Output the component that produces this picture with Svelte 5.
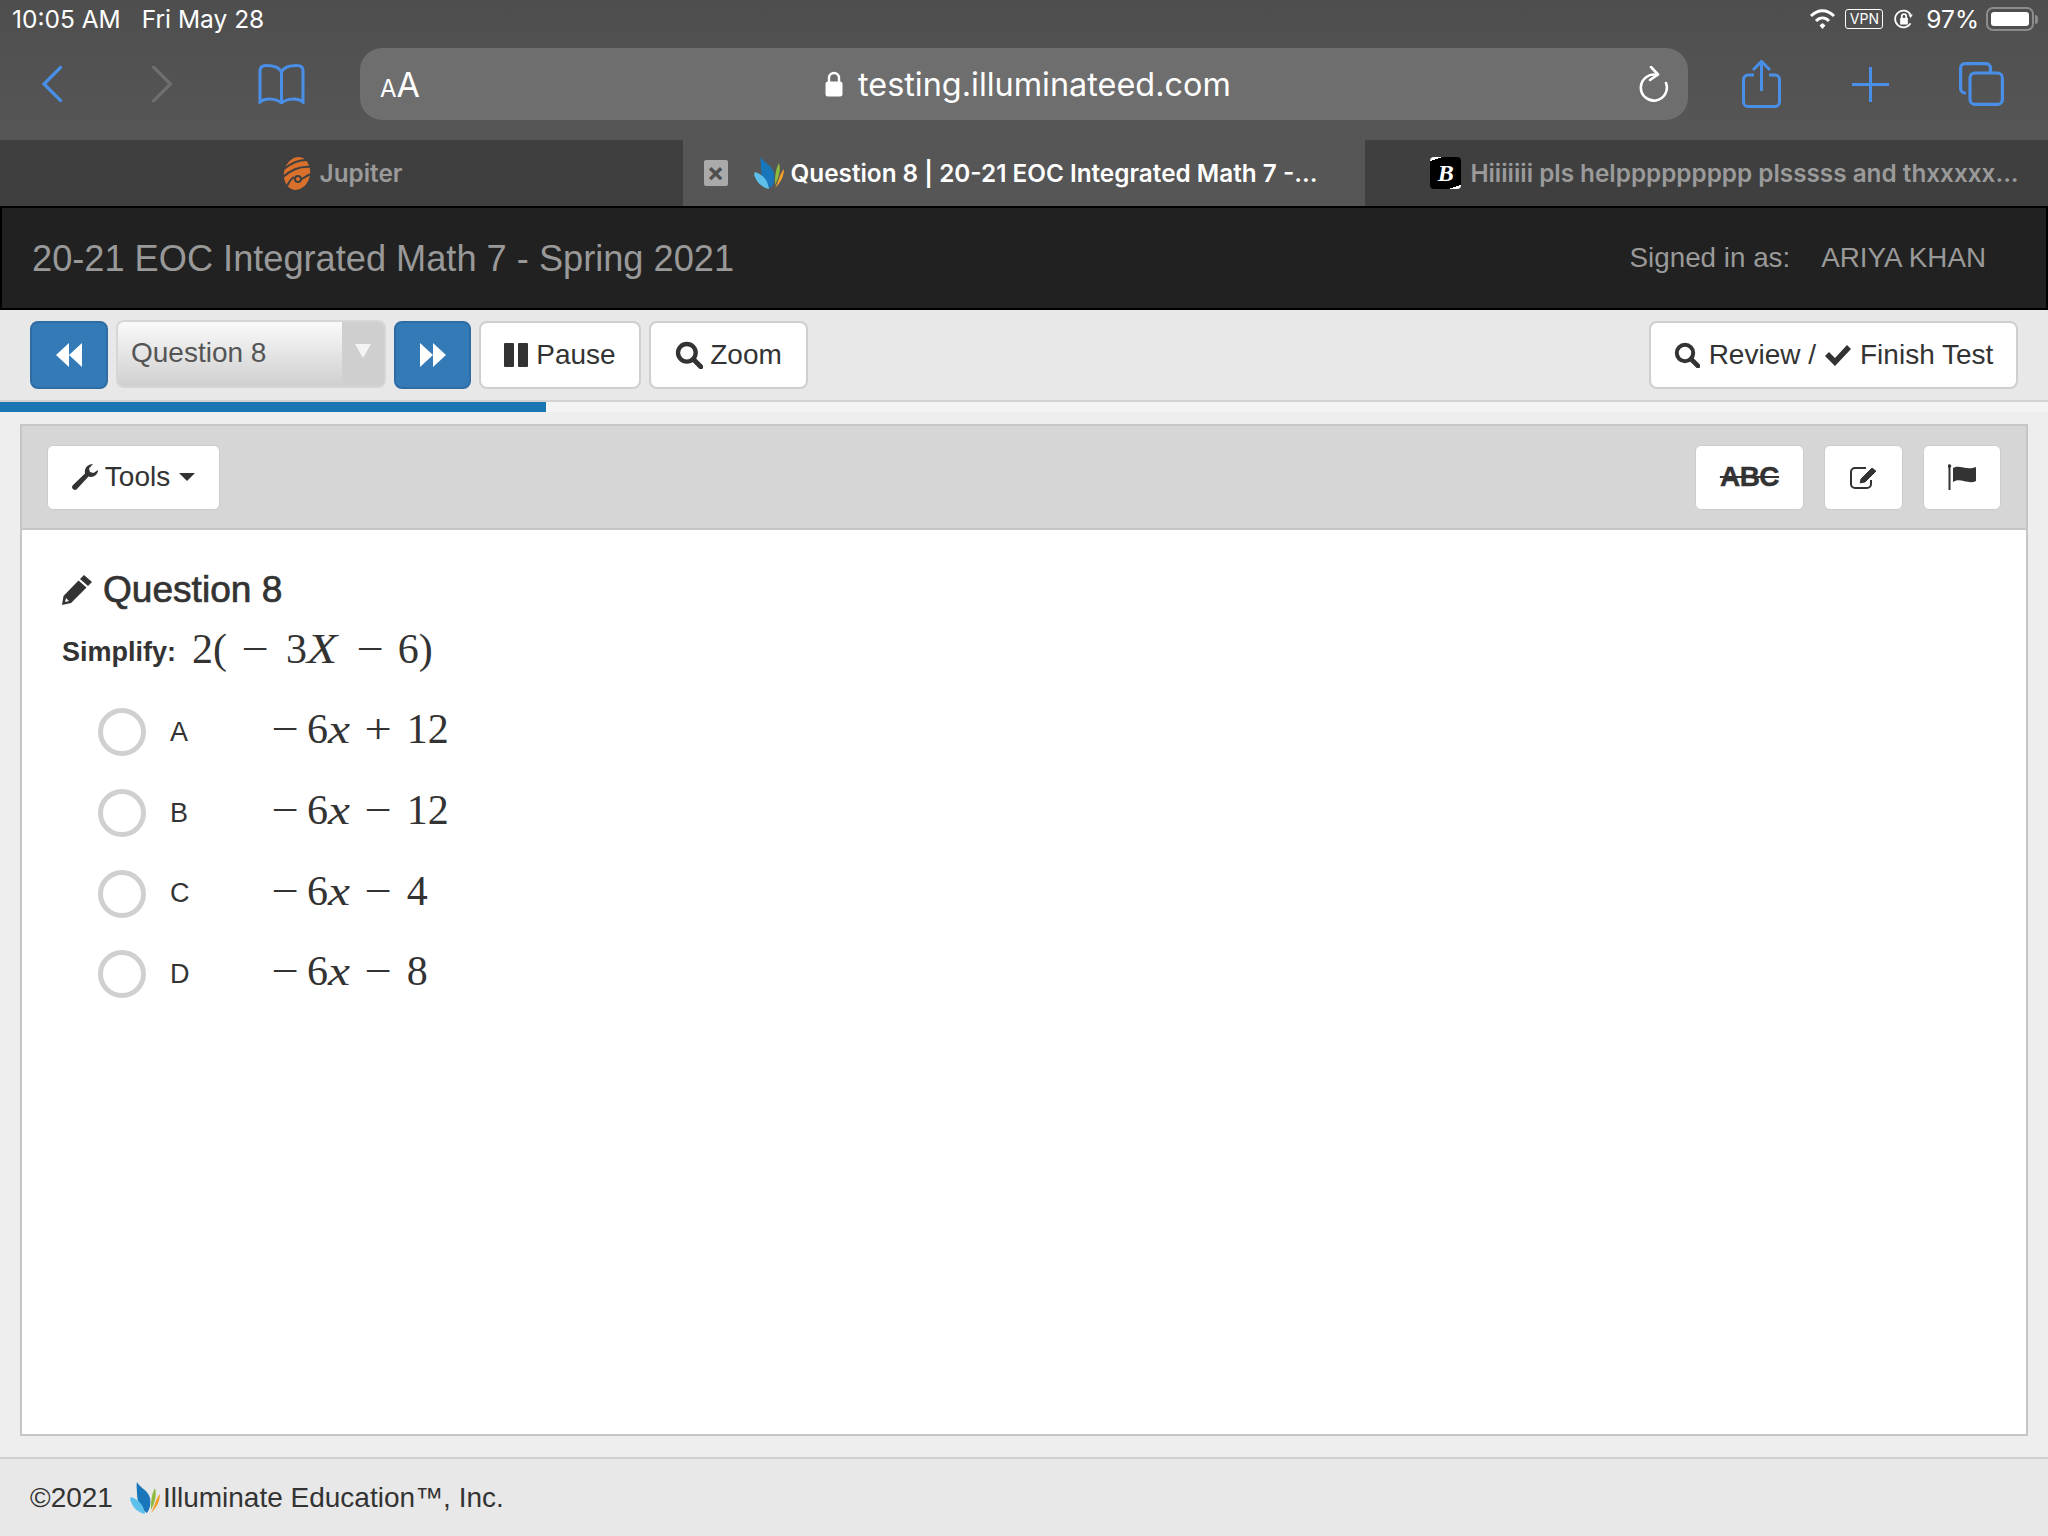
<script>
	const options = [
		{ letter: "A", op: "+", n: "12" },
		{ letter: "B", op: "−", n: "12" },
		{ letter: "C", op: "−", n: "4" },
		{ letter: "D", op: "−", n: "8" },
	];
</script>

{#snippet butterflyPaths()}
	<path d="M7 0C9 5 18 8 20 16C21 22 20 27 17 31C12 28 7 20 7 12C7 7 6 3 7 0Z" fill="#1976bb" />
	<path d="M1 15C5 16 11 20 13 25C14 28 15 30 15 32C9 31 3 26 1 20C0 18 0 16 1 15Z" fill="#5cc0ea" />
	<path d="M25 6C27 13 25 20 21 28C21 21 21 13 25 6Z" fill="#8dbb3c" />
	<path d="M30 12C30 19 27 25 21 31C24 26 25 18 30 12Z" fill="#f0a02d" />
{/snippet}

{#snippet search(size)}
	<svg width={size} height={size} viewBox="0 0 26 26" fill="none" stroke="#333">
		<circle cx="11" cy="11" r="8.2" stroke-width="4" />
		<path d="M17 17L24 24" stroke-width="4.6" stroke-linecap="round" />
	</svg>
{/snippet}

<div class="page">
	<div class="chrome">
		<div class="status">
			<span>10:05 AM</span>
			<span class="date">Fri May 28</span>
			<div class="status-right">
				<svg width="27" height="20" viewBox="0 0 27 20" fill="none" stroke="#fff" stroke-width="3">
					<path d="M2 7C9 0 18 0 25 7" />
					<path d="M7 12C11 8 16 8 20 12" />
					<path d="M13.5 14L10.5 16.5L13.5 20L16.5 16.5Z" fill="#fff" stroke="none" />
				</svg>
				<span class="vpn">VPN</span>
				<svg class="rotation" width="20" height="22" viewBox="0 0 18 20" fill="none" stroke="#fff" stroke-width="1.6">
					<path d="M15 14A7.6 7.6 0 1 1 15 6" />
					<path d="M13 6L17 6L15 9Z" fill="#fff" stroke="none" />
					<rect x="5.5" y="9" width="7" height="6" fill="#fff" stroke="none" />
					<path d="M7 9V7.5A2 2 0 0 1 11 7.5V9" />
				</svg>
				<span class="pct">97%</span>
				<div class="battery"><div class="battery-fill"></div></div>
				<div class="battery-nub"></div>
			</div>
		</div>
		<div class="nav">
			<svg class="back" width="20" height="36" viewBox="0 0 20 36" fill="none" stroke="#4a8fe7" stroke-width="3.2">
				<path d="M19 1L2 18L19 35" stroke-linecap="round" />
			</svg>
			<svg class="forward" width="21" height="36" viewBox="0 0 20 36" fill="none" stroke="#6f6f6f" stroke-width="3.2">
				<path d="M1 1L18 18L1 35" stroke-linecap="round" />
			</svg>
			<svg class="book" width="47" height="40" viewBox="0 0 47 40" fill="none" stroke="#4a8fe7" stroke-width="3">
				<path d="M23.5 8C21 2 14 1.500 8 1.500C4 1.500 2 3 2 7V38C7 34 18 34 23.500 39C29 34 40 34 45 38V7C45 3 43 1.500 39 1.500C33 1.500 26 2 23.500 8V38" />
			</svg>
			<div class="address">
				<span class="aa"><small>A</small>A</span>
				<div class="url">
					<svg width="18" height="26" viewBox="0 0 18 26" fill="#fff">
						<path d="M4 11V7A5 5 0 0 1 14 7V11" fill="none" stroke="#fff" stroke-width="2.4" />
						<rect x="0.500" y="10.500" width="17" height="15" rx="2.500" />
					</svg>
					<span>testing.illuminateed.com</span>
				</div>
				<svg class="reload" width="31" height="36" viewBox="0 0 31 36" fill="none" stroke="#fff" stroke-width="2.6">
					<path d="M19 9A13 13 0 1 0 28 17" stroke-linecap="round" />
					<path d="M13 1L20 8.500L12 14" stroke-linecap="round" stroke-linejoin="round" />
				</svg>
			</div>
			<svg class="share" width="39" height="48" viewBox="0 0 39 48" fill="none" stroke="#4a8fe7" stroke-width="3">
				<path d="M12 15H6A4.500 4.500 0 0 0 1.500 19.500V42A4.500 4.500 0 0 0 6 46.500H33A4.500 4.500 0 0 0 37.500 42V19.500A4.500 4.500 0 0 0 33 15H27" />
				<path d="M19.500 31V2M11 10L19.500 1.500L28 10" />
			</svg>
			<svg class="plus" width="37" height="35" viewBox="0 0 37 35" fill="none" stroke="#4a8fe7" stroke-width="3">
				<path d="M18.500 0V35M0 17.500H37" />
			</svg>
			<svg class="tabs-icon" width="45" height="44" viewBox="0 0 45 44" fill="none" stroke="#4a8fe7" stroke-width="3.2">
				<path d="M7 31H6A4.500 4.500 0 0 1 1.600 26.500V6A4.500 4.500 0 0 1 6 1.600H27A4.500 4.500 0 0 1 31.500 6V11" />
				<rect x="11" y="11" width="32.400" height="31.400" rx="5" />
			</svg>
		</div>
	</div>

	<div class="tabs">
		<div class="tab">
			<svg width="32" height="33" viewBox="0 0 32 33">
				<ellipse cx="16" cy="16.500" rx="13" ry="16.500" transform="rotate(12 16 16.500)" fill="#d9702c" />
				<path d="M3 12C10 6 18 3 26 3M2 20C10 13 20 9 30 10M6 29C8 25 10 22 13 20M21 22C24 20 27 18 30 17" fill="none" stroke="#3f3f3f" stroke-width="2" />
				<circle cx="17" cy="22" r="3" fill="none" stroke="#3f3f3f" stroke-width="2" />
			</svg>
			<span>Jupiter</span>
		</div>
		<div class="tab active">
			<span class="close">×</span>
			<svg width="30" height="32" viewBox="0 0 30 32">{@render butterflyPaths()}</svg>
			<span>Question 8 | 20-21 EOC Integrated Math 7 -...</span>
		</div>
		<div class="tab last">
			<span class="brainly">B</span>
			<span>Hiiiiiii pls helppppppppp plsssss and thxxxxx...</span>
		</div>
	</div>

	<header class="course">
		<h1>20-21 EOC Integrated Math 7 - Spring 2021</h1>
		<div class="signed"><span>Signed in as:</span><span>ARIYA KHAN</span></div>
	</header>

	<div class="toolbar">
		<button class="blue" aria-label="Previous">
			<svg width="26" height="24" viewBox="0 0 26 24" fill="#fff"><path d="M13 0V24L0 12ZM26 0V24L13 12Z" /></svg>
		</button>
		<div class="select">
			<span>Question 8</span>
			<div class="select-arrow"><i></i></div>
		</div>
		<button class="blue next" aria-label="Next">
			<svg width="26" height="24" viewBox="0 0 26 24" fill="#fff"><path d="M0 0L13 12L0 24ZM13 0L26 12L13 24Z" /></svg>
		</button>
		<button class="pause">
			<svg width="24" height="24" viewBox="0 0 24 24" fill="#333"><rect width="10" height="24" rx="1" /><rect x="14" width="10" height="24" rx="1" /></svg>
			Pause
		</button>
		<button class="zoom">{@render search(28)} Zoom</button>
		<button class="review">
			{@render search(26)}
			<span>Review /</span>
			<svg width="26" height="22" viewBox="0 0 26 22" fill="#333"><path d="M0 12L4 8L10 14L22 1L26 5L10 22Z" /></svg>
			<span>Finish Test</span>
		</button>
	</div>

	<div class="progress"><div class="bar" style="width: 546px"></div></div>

	<section class="panel">
		<div class="panel-head">
			<button class="tools">
				<svg width="26" height="26" viewBox="0 0 26 26" fill="#333">
					<path d="M26 6C26 11 21 14 16.500 12.500L5 25C3.500 26.500 1.500 26 0.500 24.500C-0.300 23.200 0 22 1 21L13 9.500C12 5 15 0 21 0L17 4.500L18 8L21.500 9L26 6Z" />
				</svg>
				Tools <i class="caret"></i>
			</button>
			<div class="head-right">
				<button class="abc">ABC</button>
				<button class="square note" aria-label="Notes">
					<svg width="28" height="24" viewBox="0 0 28 24" fill="none" stroke="#333" stroke-width="2">
						<path d="M16 3H5A4 4 0 0 0 1 7V19A4 4 0 0 0 5 23H17A4 4 0 0 0 21 19V15" />
						<path d="M10 14L22 2L27 6L15 18L9 19Z" fill="#333" stroke="#fff" stroke-width="1" />
					</svg>
				</button>
				<button class="square" aria-label="Flag">
					<svg width="28" height="26" viewBox="0 0 28 26" fill="#333">
						<circle cx="1.500" cy="2" r="1.800" />
						<rect x="0.500" y="2" width="2" height="24" />
						<path d="M5 4C12 0 18 7 28 3V17C20 21 12 13 5 18Z" />
					</svg>
				</button>
			</div>
		</div>
		<div class="panel-body">
			<h2>
				<svg width="30" height="30" viewBox="0 0 30 30" fill="#333">
					<path d="M22 0L30 7L26 11L18 4ZM16.500 5.500L24.500 12.500L9 28L0 30L1.500 21ZM4 23L3 27L7 26Z" />
				</svg>
				Question 8
			</h2>
			<div class="prompt">
				<b>Simplify:</b>
				<span class="math">2(<i class="minus first">−</i><span class="three">3</span><em class="wide">X</em><i class="minus">−</i>6)</span>
			</div>
			<div class="options">
				{#each options as o}
					<div class="option">
						<span class="radio"></span>
						<span class="letter">{o.letter}</span>
						<span class="math"><i class="minus lead">−</i>6<em class="wide">x</em><i class="minus sign">{o.op}</i>{o.n}</span>
					</div>
				{/each}
			</div>
		</div>
	</section>

	<footer>
		<span>©2021</span>
		<svg class="butterfly" width="30" height="32" viewBox="0 0 30 32">{@render butterflyPaths()}</svg>
		<span class="company">Illuminate Education™, Inc.</span>
	</footer>
</div>

<style>
	:global(body) {
		margin: 0;
	}
	button {
		font-family: inherit;
		cursor: pointer;
	}
	.page {
		width: 2048px;
		height: 1536px;
		display: flex;
		flex-direction: column;
		overflow: hidden;
		background: #eeeeee;
		color: #333;
		font-family: "Liberation Sans", Arial, sans-serif;
	}

	/* safari chrome */
	.chrome {
		height: 140px;
		background: linear-gradient(#4e4e4e, #565656);
		color: #fff;
		font-family: Inter, "Liberation Sans", sans-serif;
	}
	.status {
		display: flex;
		align-items: center;
		height: 38px;
		padding: 0 10px 0 12px;
		font-size: 24.500px;
	}
	.date {
		margin-left: 21px;
	}
	.status-right {
		display: flex;
		align-items: center;
		margin-left: auto;
	}
	.vpn {
		margin-left: 9px;
		padding: 0 2px;
		width: 38px;
		height: 20px;
		box-sizing: border-box;
		border: 1.500px solid #fff;
		border-radius: 3px;
		font-size: 14px;
		line-height: 17px;
		text-align: center;
	}
	.rotation {
		margin-left: 11px;
	}
	.pct {
		margin-left: 12px;
		font-size: 24.500px;
	}
	.battery {
		width: 48px;
		height: 24px;
		box-sizing: border-box;
		margin-left: 7px;
		padding: 3px;
		border: 2px solid #8c8c8c;
		border-radius: 7px;
	}
	.battery-fill {
		width: 38px;
		height: 14px;
		background: #fff;
		border-radius: 3px;
	}
	.battery-nub {
		width: 3px;
		height: 9px;
		margin-left: 1px;
		background: #8c8c8c;
		border-radius: 0 3px 3px 0;
	}
	.nav {
		display: flex;
		align-items: center;
		height: 72px;
		margin-top: 10px;
		padding-left: 42px;
	}
	.forward {
		margin-left: 90px;
	}
	.book {
		margin-left: 85px;
	}
	.address {
		position: relative;
		display: flex;
		align-items: center;
		width: 1328px;
		height: 72px;
		margin-left: 55px;
		background: #6e6e6e;
		border-radius: 22px;
	}
	.aa {
		margin-left: 20px;
		font-size: 34px;
	}
	.aa small {
		font-size: 24px;
	}
	.url {
		position: absolute;
		left: 465px;
		display: flex;
		align-items: center;
		gap: 15px;
		font-size: 32.400px;
	}
	.reload {
		margin-left: auto;
		margin-right: 19px;
	}
	.share {
		margin-left: 54px;
	}
	.plus {
		margin-left: 71px;
	}
	.tabs-icon {
		margin-left: 70px;
	}

	.tabs {
		display: grid;
		grid-template-columns: 683px 682px 683px;
		height: 66px;
		background: #3f3f3f;
		color: #9a9a9a;
		font-family: Inter, "Liberation Sans", sans-serif;
		font-size: 24.300px;
		font-weight: 600;
	}
	.tab {
		display: flex;
		align-items: center;
		justify-content: center;
		gap: 7px;
		white-space: nowrap;
	}
	.tab.active {
		padding-right: 27px;
		background: #565656;
		color: #fff;
	}
	.tab.last {
		gap: 9px;
		padding-left: 36px;
	}
	.close {
		width: 24px;
		height: 26px;
		margin-right: 19px;
		background: #aaaaaa;
		border-radius: 2px;
		color: #4f4f4f;
		font-size: 26px;
		font-weight: 700;
		line-height: 25px;
		text-align: center;
	}
	.brainly {
		width: 31px;
		height: 32px;
		background: linear-gradient(160deg, #fff 10%, #000 10%, #000 90%, #fff 90%);
		box-sizing: border-box;
		border-radius: 4px;
		color: #fff;
		font-family: "Liberation Serif", serif;
		font-style: italic;
		font-weight: 700;
		font-size: 24px;
		line-height: 32px;
		text-align: center;
	}

	.course {
		display: flex;
		align-items: center;
		justify-content: space-between;
		height: 104px;
		box-sizing: border-box;
		padding: 0 60px 0 30px;
		background: #212121;
		border: 2px solid #000;
		color: #999;
	}
	h1 {
		margin: 2px 0 0;
		font-size: 36.200px;
		font-weight: 400;
	}
	.signed {
		display: flex;
		gap: 31px;
		font-size: 27.800px;
	}

	.toolbar {
		display: flex;
		align-items: center;
		gap: 8px;
		height: 90px;
		box-sizing: border-box;
		padding: 0 30px;
		background: #e8e8e8;
	}
	.toolbar button {
		display: flex;
		align-items: center;
		justify-content: center;
		height: 68px;
		padding: 0;
		background: #fff;
		border: 2px solid #cfcfcf;
		border-radius: 8px;
		color: #333;
		font-size: 28px;
	}
	.toolbar button.blue {
		width: 78px;
		background: #337ab7;
		border-color: #2e6da4;
	}
	.toolbar button.next {
		width: 77px;
	}
	.select {
		display: flex;
		align-items: center;
		justify-content: space-between;
		width: 270px;
		height: 68px;
		box-sizing: border-box;
		margin-top: -2px;
		padding-left: 13px;
		background: linear-gradient(#fafafa, #cfcfcf);
		border: 2px solid #d6d6d6;
		border-radius: 8px;
		color: #555;
		font-size: 28px;
		line-height: 60px;
	}
	.select span {
		margin-top: -2px;
	}
	.select-arrow {
		display: flex;
		justify-content: center;
		width: 42px;
		height: 100%;
		padding-top: 22px;
		box-sizing: border-box;
		background: #cfcfcf;
		border-radius: 0 6px 6px 0;
	}
	.select-arrow i {
		width: 0;
		height: 0;
		border-left: 8px solid transparent;
		border-right: 8px solid transparent;
		border-top: 14px solid #f4f4f4;
	}
	.toolbar .pause {
		width: 162px;
		gap: 8px;
	}
	.toolbar .zoom {
		width: 159px;
		gap: 7px;
	}
	.toolbar .review {
		width: 369px;
		margin-left: auto;
		gap: 9px;
	}

	.progress {
		height: 10px;
		border-top: 2px solid #d2d2d2;
		background: #f4f4f4;
	}
	.bar {
		height: 100%;
		background: #1a76b2;
	}

	.panel {
		flex: 1;
		display: flex;
		flex-direction: column;
		margin: 12px 20px 21px;
		background: #fff;
		border: 2px solid #c6c6c6;
	}
	.panel-head {
		display: flex;
		align-items: center;
		justify-content: space-between;
		height: 104px;
		box-sizing: border-box;
		padding: 0 25px;
		background: #d6d6d6;
		border-bottom: 2px solid #c6c6c6;
	}
	.panel-head button {
		display: flex;
		align-items: center;
		justify-content: center;
		height: 65px;
		padding: 0;
		background: #fff;
		border: 1px solid #cccccc;
		border-radius: 6px;
		color: #333;
		font-size: 28px;
	}
	.tools {
		width: 173px;
		gap: 7px;
	}
	.caret {
		width: 0;
		height: 0;
		margin-left: 2px;
		border-left: 8px solid transparent;
		border-right: 8px solid transparent;
		border-top: 8px solid #333;
	}
	.head-right {
		display: flex;
		gap: 20px;
	}
	.panel-head .abc {
		width: 109px;
		font-weight: 700;
		text-decoration: line-through;
		letter-spacing: -0.500px;
		-webkit-text-stroke: 0.400px #333;
	}
	.panel-head .square {
		width: 78px;
	}
	.panel-head .note {
		width: 79px;
	}

	.panel-body {
		padding: 37px 40px 0;
	}
	h2 {
		display: flex;
		align-items: center;
		gap: 11px;
		margin: 0;
		height: 44px;
		font-size: 37.100px;
		font-weight: 400;
		-webkit-text-stroke: 0.700px #333;
	}
	h2 svg {
		margin-top: 2px;
	}
	.prompt {
		display: flex;
		align-items: center;
		gap: 16px;
		height: 66px;
		margin-top: 6px;
	}
	.prompt b {
		font-size: 27px;
		margin-top: 5px;
	}
	.prompt .math {
		margin-top: -2px;
	}
	.math {
		font-family: "Liberation Serif", serif;
		font-size: 42px;
		white-space: nowrap;
	}
	.wide {
		display: inline-block;
		transform: scaleX(1.18);
		transform-origin: left;
		font-style: italic;
	}
	.three {
		margin-left: 18px;
	}
	.minus {
		display: inline-block;
		width: 26px;
		margin-left: 18px;
		font-style: normal;
		text-align: center;
		transform: scaleX(1.15);
	}
	.minus.first {
		margin-left: 15px;
	}
	.prompt .wide + .minus {
		margin-left: 24px;
		margin-right: 15px;
	}
	.minus.lead {
		margin: 0 9px 0 0;
	}
	.minus.sign {
		margin: 0 16px 0 18px;
	}
	.options {
		margin-top: 9px;
	}
	.option {
		display: flex;
		align-items: center;
		height: 80.700px;
		padding-left: 36px;
	}
	.option .math {
		margin-top: -6px;
	}
	.radio {
		width: 48px;
		height: 48px;
		box-sizing: border-box;
		background: #fff;
		border: 5px solid #d0d0d0;
		border-radius: 50%;
	}
	.letter {
		width: 102px;
		margin-left: 24px;
		font-size: 27px;
	}

	footer {
		display: flex;
		align-items: center;
		height: 79px;
		box-sizing: border-box;
		padding: 0 0 0 30px;
		background: #e8e8e8;
		border-top: 2px solid #d0d0d0;
		font-size: 28px;
	}
	.butterfly {
		margin-left: 17px;
	}
	.company {
		margin-left: 3px;
	}
</style>
